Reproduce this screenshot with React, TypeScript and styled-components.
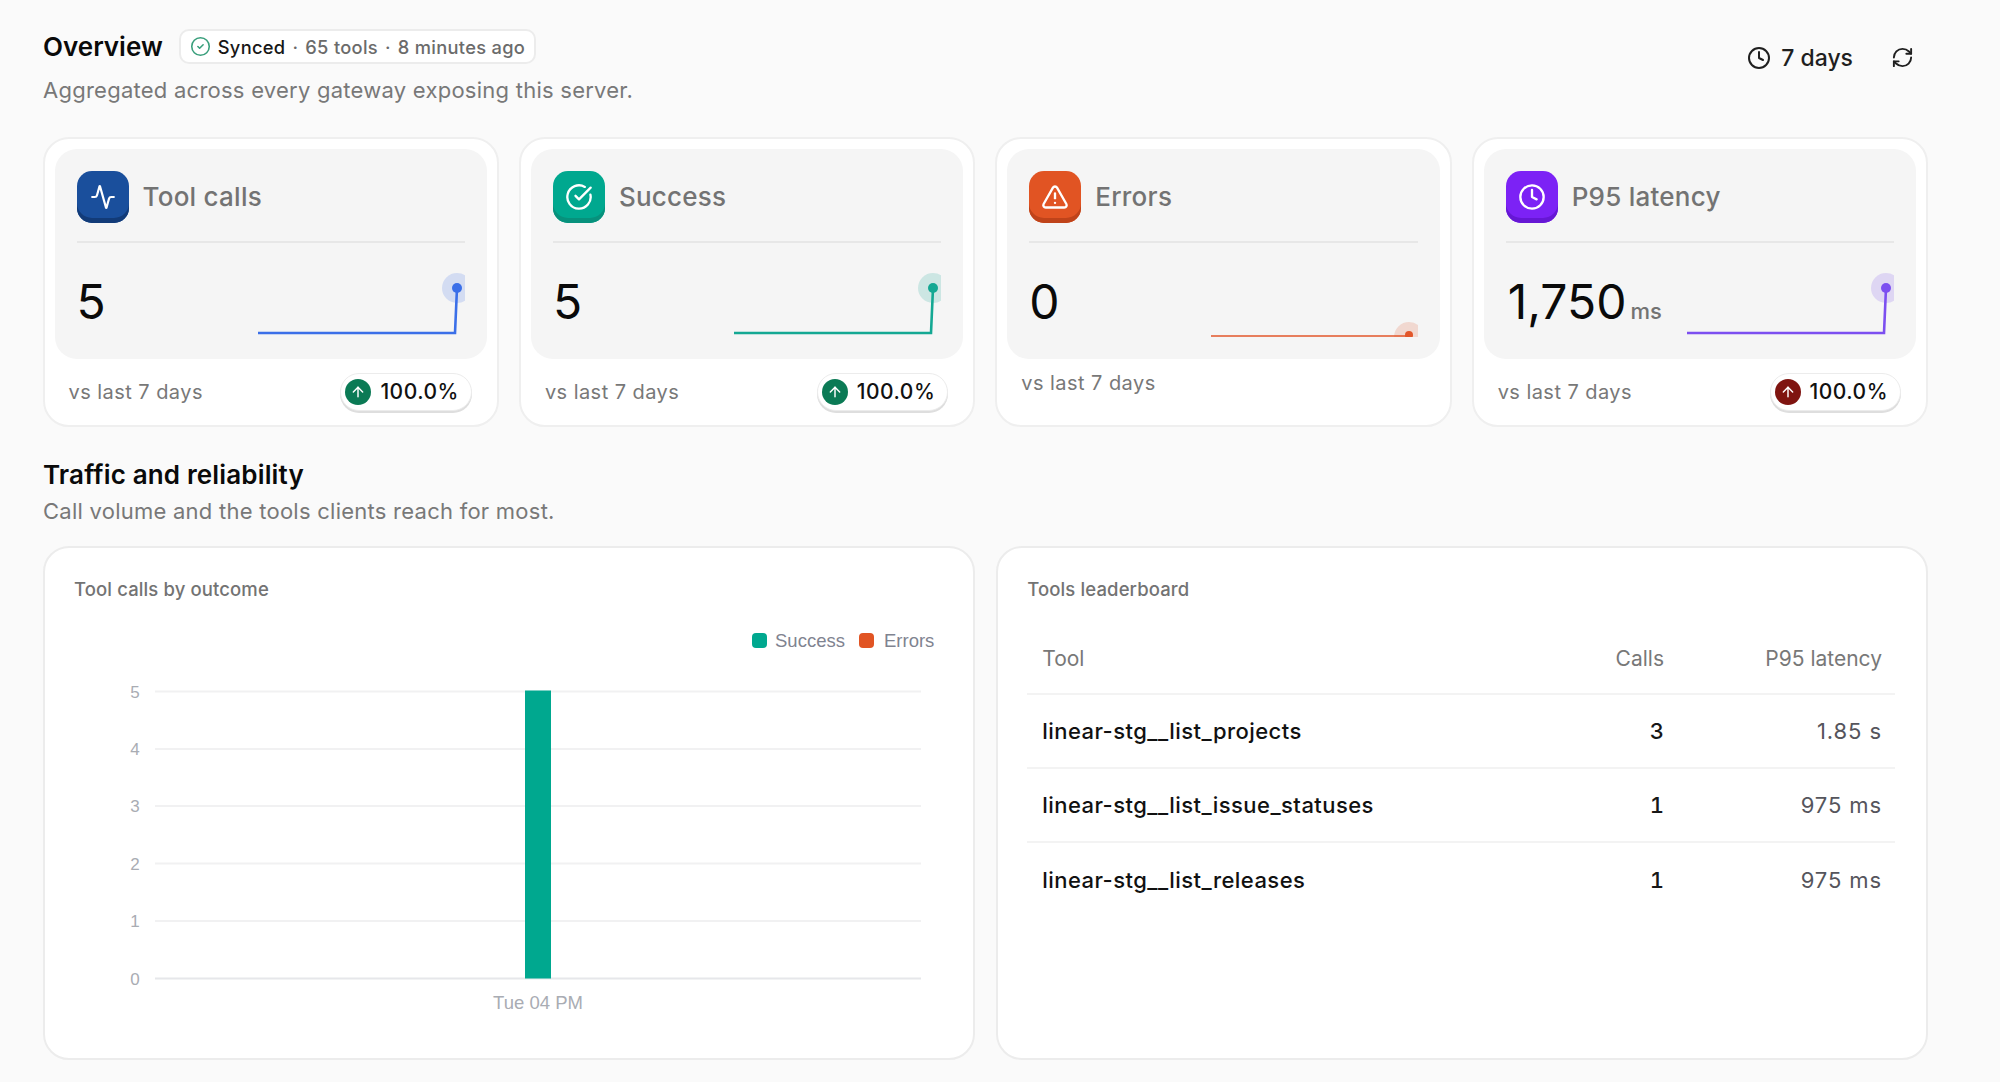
import React from "react";
import styled, { createGlobalStyle } from "styled-components";
import { Activity, ArrowUp, CircleCheck, CircleCheckBig, Clock, RefreshCw, TriangleAlert } from "lucide-react";

const Global = createGlobalStyle`
  html, body { margin: 0; background: #fafafa; }
  body { font-family: Inter, "Liberation Sans", sans-serif; color: #0a0a0a; }
  * { box-sizing: border-box; }
`;

const Page = styled.div`
  width: 2000px;
  height: 1082px;
  padding: 29px 72px 22px 42.5px;
  display: flex;
  flex-direction: column;
  background: #fafafa;
`;
const TopBar = styled.header`
  display: flex;
  justify-content: space-between;
  align-items: flex-start;
  height: 108px;
  padding-left: 0.5px;
`;
const TitleRow = styled.div`
  display: flex;
  align-items: center;
  gap: 16px;
  height: 35px;
`;
const Title = styled.h1`
  margin: 0;
  font-size: 26px;
  line-height: 35px;
  font-weight: 600;
`;
const Badge = styled.div`
  display: flex;
  align-items: center;
  gap: 7px;
  height: 35px;
  padding: 0 9px;
  background: #fff;
  border: 2px solid #ececec;
  border-radius: 10px;
  font-size: 18.3px;
  letter-spacing: 0.3px;
  color: #6b6b6b;
  font-weight: 500;
  svg { color: #3a9f7c; flex: none; }
  b { color: #171717; font-weight: 500; }
`;
const Sub = styled.p`
  margin: 0;
  font-size: 22px;
  line-height: 28px;
  color: #787878;
  letter-spacing: 0.25px;
`;
const HeadSub = styled(Sub)`
  margin-top: 11.5px;
`;
const TopActions = styled.div`
  display: flex;
  align-items: center;
  margin-top: 14.5px;
  margin-right: 14px;
  color: #1f1f1f;
  svg { flex: none; }
`;
const Range = styled.div`
  display: flex;
  align-items: center;
  gap: 10px;
  font-size: 23px;
  font-weight: 500;
  margin-right: 38px;
`;
const StatGrid = styled.section`
  display: grid;
  grid-template-columns: repeat(4, minmax(0, 1fr));
  gap: 20px;
  height: 290px;
`;
const StatCard = styled.article`
  background: #fff;
  border: 2px solid #efefef;
  border-radius: 26px;
  padding: 10px;
`;
const StatInner = styled.div`
  height: 210px;
  background: #f5f5f5;
  border-radius: 22px;
  padding: 22px;
`;
const StatHead = styled.div`
  display: flex;
  align-items: center;
  gap: 14px;
  height: 72px;
  padding-bottom: 18px;
  border-bottom: 2px solid #e7e7e7;
`;
const IconTile = styled.div<{ $bg: string; $edge: string }>`
  width: 52px;
  height: 52px;
  border-radius: 15px;
  display: flex;
  align-items: center;
  justify-content: center;
  color: #fff;
  background: ${(p) => p.$bg};
  box-shadow: inset 0 -5px 0 ${(p) => p.$edge};
`;
const StatLabel = styled.div`
  font-size: 26px;
  line-height: 30px;
  padding-bottom: 1px;
  font-weight: 500;
  color: #737373;
  letter-spacing: 0.25px;
`;
const StatBody = styled.div`
  display: flex;
  justify-content: space-between;
  align-items: flex-start;
  margin-top: 30px;
`;
const Value = styled.div<{ $indent: boolean }>`
  font-size: 48px;
  line-height: 58px;
  font-weight: 400;
  color: #0a0a0a;
  padding-left: ${(p) => (p.$indent ? "2px" : "0")};
  small { font-size: 22px; font-weight: 500; color: #737373; margin-left: 4px; }
`;
const Spark = styled.svg`
  display: block;
  flex: none;
`;
const StatFoot = styled.div`
  display: flex;
  justify-content: space-between;
  align-items: flex-start;
  padding: 9.5px 15px 0 14px;
`;
const FootText = styled.span<{ $pill: boolean }>`
  font-size: 20px;
  line-height: 28px;
  color: #787878;
  letter-spacing: 0.45px;
  margin-top: ${(p) => (p.$pill ? "9px" : "0.5px")};
`;
const Pill = styled.div`
  display: flex;
  align-items: center;
  gap: 9px;
  height: 38px;
  margin-top: 4px;
  padding: 0 12px 0 4px;
  background: #fff;
  border: 1.5px solid #ececec;
  border-radius: 19px;
  box-shadow: 0 2px 0 #dedede;
  font-size: 21px;
  font-weight: 500;
  color: #111;
  letter-spacing: 0.5px;
`;
const PillDot = styled.span<{ $bg: string }>`
  width: 26px;
  height: 26px;
  border-radius: 50%;
  background: ${(p) => p.$bg};
  color: #fff;
  display: flex;
  align-items: center;
  justify-content: center;
`;
const SectionHead = styled.div`
  margin-top: 32px;
  height: 87px;
  padding-left: 0.5px;
`;
const SectionTitle = styled.h2`
  margin: 0;
  font-size: 26px;
  line-height: 32px;
  font-weight: 600;
  letter-spacing: 0.15px;
`;
const SectionSub = styled(Sub)`
  margin-top: 5.5px;
`;
const PanelGrid = styled.section`
  display: grid;
  grid-template-columns: repeat(2, minmax(0, 1fr));
  gap: 21px;
  height: 514px;
`;
const Panel = styled.article`
  background: #fff;
  border: 2px solid #ececec;
  border-radius: 26px;
  padding: 29px 31px 0 29.5px;
  overflow: hidden;
`;
const PanelTitle = styled.div`
  font-size: 18.5px;
  line-height: 24px;
  font-weight: 500;
  color: #737373;
  letter-spacing: 0.12px;
`;
const Chart = styled.svg`
  display: block;
  margin: 18px 0 0 0.5px;
  font-family: "Liberation Sans", Arial, sans-serif;
`;
const Row = styled.div<{ $last?: boolean }>`
  display: grid;
  grid-template-columns: 1fr 100px 218px;
  align-items: center;
  height: 74px;
  padding: 0 13px 0 15px;
  border-bottom: ${(p) => (p.$last ? "none" : "2px solid #f3f3f3")};
  font-size: 22px;
`;
const HeadRow = styled(Row)`
  height: 72px;
  margin-top: 22px;
  font-size: 21px;
  color: #787878;
`;
const Right = styled.span`
  text-align: right;
`;
const ToolName = styled.span`
  font-weight: 450;
  color: #111;
  letter-spacing: 0.45px;
`;
const Calls = styled(Right)`
  font-weight: 500;
  color: #171717;
  font-variant-numeric: tabular-nums;
`;
const Latency = styled(Right)`
  color: #55555c;
  letter-spacing: 0.9px;
`;

type SparkProps = { color: string; zero?: boolean };
function Sparkline({ color, zero }: SparkProps) {
  return (
    <Spark width="207" height="64" viewBox="0 0 207 64">
      {zero ? (
        <>
          <circle cx="198" cy="64" r="15" fill={color} opacity="0.18" />
          <circle cx="198" cy="62" r="4" fill={color} />
          <path d="M0 63H198" fill="none" stroke={color} strokeWidth="1.6" />
        </>
      ) : (
        <>
          <circle cx="199" cy="15" r="15" fill={color} opacity="0.18" />
          <path d="M0 60H197L199 15" fill="none" stroke={color} strokeWidth="2.6" />
          <circle cx="199" cy="15" r="5" fill={color} />
        </>
      )}
    </Spark>
  );
}

type Stat = {
  label: string;
  value: string;
  unit?: string;
  bg: string;
  edge: string;
  line: string;
  icon: React.ReactNode;
  zero?: boolean;
  pill?: string;
};
const stats: Stat[] = [
  { label: "Tool calls", value: "5", bg: "#1a4f9c", edge: "#123b78", line: "#3b6fe8", icon: <Activity size={26} strokeWidth={2} />, pill: "#0b7a55" },
  { label: "Success", value: "5", bg: "#00a88f", edge: "#07917c", line: "#14a893", icon: <CircleCheckBig size={28} strokeWidth={2} />, pill: "#0b7a55" },
  { label: "Errors", value: "0", bg: "#e15423", edge: "#bf431a", line: "#e2562a", icon: <TriangleAlert size={28} strokeWidth={2} />, zero: true },
  { label: "P95 latency", value: "1,750", unit: "ms", bg: "#7c22f5", edge: "#6617d4", line: "#7c4ff0", icon: <Clock size={28} strokeWidth={2} />, pill: "#7f1410" },
];

const leaders = [
  { tool: "linear-stg__list_projects", calls: 3, p95: "1.85 s" },
  { tool: "linear-stg__list_issue_statuses", calls: 1, p95: "975 ms" },
  { tool: "linear-stg__list_releases", calls: 1, p95: "975 ms" },
];

const ys = [692.5, 750, 807, 864.5, 922, 979.5].map((y) => y - 620);

function OutcomeChart() {
  return (
    <Chart width="868" height="420" viewBox="0 0 868 420">
      <rect x="677" y="14" width="15" height="15" rx="4" fill="#00a88f" />
      <text x="700" y="27.5" fontSize="18.5" fill="#7f8390">Success</text>
      <rect x="784" y="14" width="15" height="15" rx="4" fill="#e15423" />
      <text x="809" y="27.5" fontSize="18.5" fill="#7f8390">Errors</text>
      {ys.map((y, i) => (
        <g key={i}>
          <line x1="80" x2="846" y1={y} y2={y} stroke={i === 5 ? "#e6e7ea" : "#f1f1f2"} strokeWidth="2" />
          <text x="60" y={y + 6} fontSize="17" textAnchor="middle" fill="#a9acb3">{5 - i}</text>
        </g>
      ))}
      <rect x="450" y={ys[0] - 1} width="26" height={ys[5] - ys[0] + 1} fill="#00a88f" />
      <text x="463" y="390" fontSize="18.5" textAnchor="middle" fill="#a9acb3">Tue 04 PM</text>
    </Chart>
  );
}

export default function App() {
  return (
    <Page>
      <Global />
      <TopBar>
        <div>
          <TitleRow>
            <Title>Overview</Title>
            <Badge>
              <CircleCheck size={21} strokeWidth={1.8} />
              <b>Synced</b>
              <span>·</span>
              <span>65 tools</span>
              <span>·</span>
              <span>8 minutes ago</span>
            </Badge>
          </TitleRow>
          <HeadSub>Aggregated across every gateway exposing this server.</HeadSub>
        </div>
        <TopActions>
          <Range>
            <Clock size={24} strokeWidth={2} />
            7 days
          </Range>
          <RefreshCw size={23} strokeWidth={2} />
        </TopActions>
      </TopBar>

      <StatGrid>
        {stats.map((s) => (
          <StatCard key={s.label}>
            <StatInner>
              <StatHead>
                <IconTile $bg={s.bg} $edge={s.edge}>{s.icon}</IconTile>
                <StatLabel>{s.label}</StatLabel>
              </StatHead>
              <StatBody>
                <Value $indent={!!s.unit}>
                  {s.value}
                  {s.unit && <small>{s.unit}</small>}
                </Value>
                <Sparkline color={s.line} zero={s.zero} />
              </StatBody>
            </StatInner>
            <StatFoot>
              <FootText $pill={!!s.pill}>vs last 7 days</FootText>
              {s.pill && (
                <Pill>
                  <PillDot $bg={s.pill}><ArrowUp size={16} strokeWidth={2.2} /></PillDot>
                  100.0%
                </Pill>
              )}
            </StatFoot>
          </StatCard>
        ))}
      </StatGrid>

      <SectionHead>
        <SectionTitle>Traffic and reliability</SectionTitle>
        <SectionSub>Call volume and the tools clients reach for most.</SectionSub>
      </SectionHead>

      <PanelGrid>
        <Panel>
          <PanelTitle>Tool calls by outcome</PanelTitle>
          <OutcomeChart />
        </Panel>
        <Panel>
          <PanelTitle>Tools leaderboard</PanelTitle>
          <HeadRow>
            <span>Tool</span>
            <Right>Calls</Right>
            <Right>P95 latency</Right>
          </HeadRow>
          {leaders.map((r, i) => (
            <Row key={r.tool} $last={i === leaders.length - 1}>
              <ToolName>{r.tool}</ToolName>
              <Calls>{r.calls}</Calls>
              <Latency>{r.p95}</Latency>
            </Row>
          ))}
        </Panel>
      </PanelGrid>
    </Page>
  );
}
